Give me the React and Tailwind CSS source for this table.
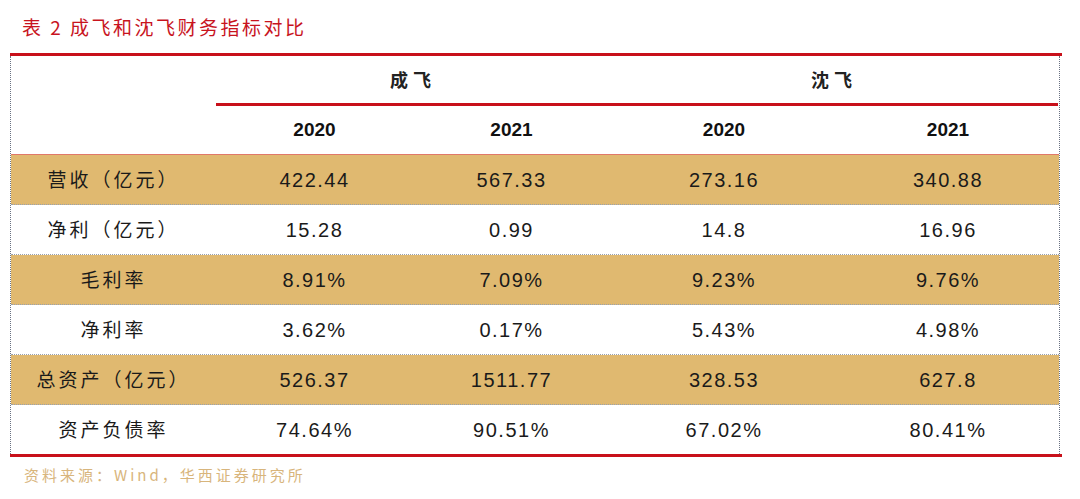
import React from "react";

const rows = [
    { label: "营收（亿元）", values: ["422.44", "567.33", "273.16", "340.88"], tan: true },
    { label: "净利（亿元）", values: ["15.28", "0.99", "14.8", "16.96"], tan: false },
    { label: "毛利率", values: ["8.91%", "7.09%", "9.23%", "9.76%"], tan: true },
    { label: "净利率", values: ["3.62%", "0.17%", "5.43%", "4.98%"], tan: false },
    { label: "总资产（亿元）", values: ["526.37", "1511.77", "328.53", "627.8"], tan: true },
    { label: "资产负债率", values: ["74.64%", "90.51%", "67.02%", "80.41%"], tan: false },
];

const cols = "grid grid-cols-[205px_197px_197px_228px_220px]";
const cjk = { fontFamily: '"Noto Sans CJK SC", sans-serif' };

export default function App() {
    return (
        <div className="w-[1080px] h-[499px] bg-white overflow-hidden" style={cjk}>
            {/* title */}
            <div className="h-[53px] pl-[22px] pt-[14px] text-[19px] leading-[26px] text-[#c8141e] tracking-[2.5px]">
                表 2 成飞和沈飞财务指标对比
            </div>

            <div className="ml-[10px] w-[1052px] h-[3px] bg-[#c8101a]" />

            <div className="ml-[10px] w-[1050px] border-x border-dotted border-gray-500">
                {/* company header */}
                <div className={`${cols} h-[47px] items-center`}>
                    <div />
                    <div className="col-span-2 text-center text-[18px] font-bold tracking-[5px] text-[#222]">成飞</div>
                    <div className="col-span-2 text-center text-[18px] font-bold tracking-[5px] text-[#222]">沈飞</div>
                </div>
                <div className={`${cols}`}>
                    <div />
                    <div className="col-span-4 h-[3px] bg-[#c8101a]" />
                </div>
                {/* years */}
                <div
                    className={`${cols} h-[49px] items-center border-b border-[#e0786a] text-[19px] font-bold text-[#111]`}
                    style={{ fontFamily: '"Liberation Sans", sans-serif' }}
                >
                    <div />
                    <div className="text-center">2020</div>
                    <div className="text-center">2021</div>
                    <div className="text-center">2020</div>
                    <div className="text-center">2021</div>
                </div>

                {rows.map((row, i) => (
                    <div
                        key={row.label}
                        className={`${cols} items-center ${i === rows.length - 1 ? "h-[49px]" : "h-[50px] border-b border-dotted border-gray-400"} ${row.tan ? "bg-[#e0b970]" : "bg-white"}`}
                    >
                        <div className="text-center text-[19px] tracking-[3px] text-[#1a1a1a]">{row.label}</div>
                        {row.values.map((v, j) => (
                            <div
                                key={j}
                                className="text-center text-[20px] tracking-[1.5px] text-[#1a1a1a]"
                                style={{ fontFamily: '"Liberation Sans", sans-serif' }}
                            >
                                {v}
                            </div>
                        ))}
                    </div>
                ))}
            </div>

            <div className="ml-[10px] w-[1052px] h-[3px] bg-[#c8101a]" />

            {/* source */}
            <div className="pl-[24px] pt-[7px] text-[15px] tracking-[3px] text-[#d8b57c]">
                资料来源：Wind，华西证券研究所
            </div>
        </div>
    );
}
